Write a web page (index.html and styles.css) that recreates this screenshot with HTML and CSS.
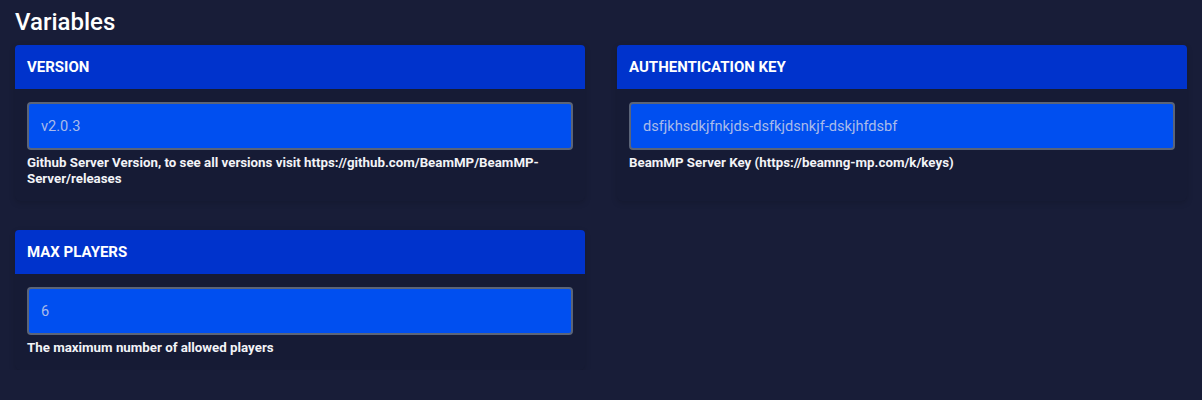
FILE: index.html
```html
<!DOCTYPE html>
<html>
<head>
<meta charset="utf-8">
<link rel="stylesheet" href="styles.css">
</head>
<body>
<main class="page">
  <h1 class="title">Variables</h1>
  <div class="grid">
    <section class="card">
      <header class="card-head">VERSION</header>
      <div class="card-body">
        <div class="input">v2.0.3</div>
        <p class="help">Github Server Version, to see all versions visit https://github.com/BeamMP/BeamMP-Server/releases</p>
      </div>
    </section>
    <section class="card">
      <header class="card-head">AUTHENTICATION KEY</header>
      <div class="card-body">
        <div class="input">dsfjkhsdkjfnkjds-dsfkjdsnkjf-dskjhfdsbf</div>
        <p class="help">BeamMP Server Key (https://beamng-mp.com/k/keys)</p>
      </div>
    </section>
    <section class="card">
      <header class="card-head">MAX PLAYERS</header>
      <div class="card-body">
        <div class="input">6</div>
        <p class="help">The maximum number of allowed players</p>
      </div>
    </section>
  </div>
</main>
</body>
</html>
```

FILE: styles.css
```css
* { box-sizing: border-box; }
html, body {
  margin: 0;
  background: #181d38;
  font-family: Roboto, "Liberation Sans", sans-serif;
  color: #fff;
}
.page {
  padding: 6px 15px 0 15px;
}
.title {
  margin: 0 0 6px 0;
  font-size: 24px;
  font-weight: 500;
  line-height: 33px;
  color: #fff;
}
.grid {
  display: grid;
  grid-template-columns: 570px 570px;
  column-gap: 32px;
  row-gap: 29px;
  align-items: start;
}
.card {
  background: #161b35;
  border-radius: 5px;
  box-shadow: 0 2px 6px rgba(0,0,0,0.15);
}
.grid > .card:nth-child(-n+2) {
  align-self: stretch;
}
.card-head {
  background: #0033cc;
  height: 44px;
  padding: 0 12px;
  display: flex;
  align-items: center;
  font-size: 15px;
  font-weight: 700;
  border-radius: 4px 4px 0 0;
  color: #fff;
}
.card-body {
  padding: 13px 12px 14px 12px;
}
.input {
  height: 48px;
  background: #004ff0;
  border: 2px solid #5b6478;
  border-radius: 4px;
  padding: 0 12px;
  display: flex;
  align-items: center;
  font-size: 14.6px;
  color: #a9bbea;
}
.help {
  margin: 5px 0 0 0;
  font-size: 13.3px;
  line-height: 16px;
  font-weight: 700;
  color: #f2f3f7;
}
```
